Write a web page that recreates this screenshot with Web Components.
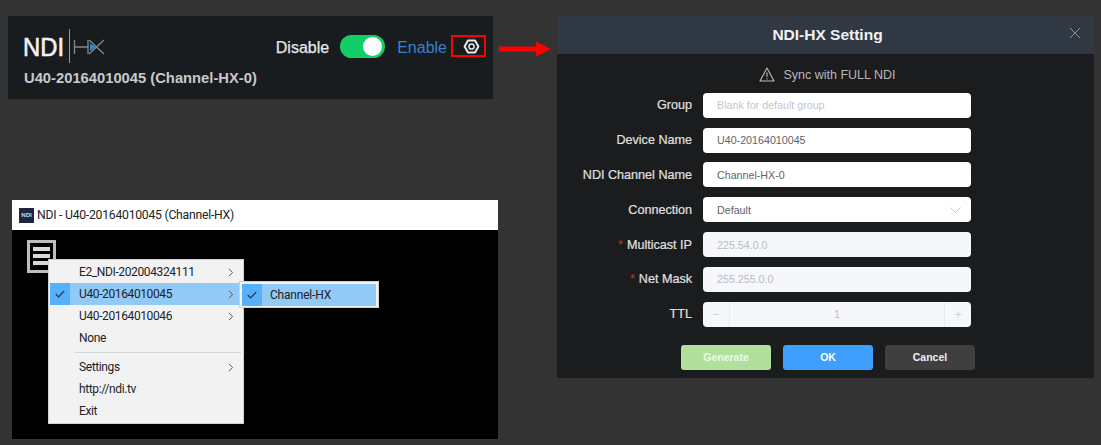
<!DOCTYPE html>
<html><head><meta charset="utf-8">
<style>
html,body{margin:0;padding:0;background:#333;}
body{width:1101px;height:445px;overflow:hidden;font-family:"Liberation Sans",Arial,sans-serif;}
</style></head>
<body>
<template id="t-page"><style>
:host{display:flex;width:1101px;height:445px;box-sizing:border-box;padding:16px 0 0 8px;align-items:flex-start;background:#333}
.left{display:flex;flex-direction:column;width:490px;flex:none}
.arrow{flex:none;width:54px;margin:21px 0 0 1px;display:flex}
</style>
<div class="left"><slot name="left"></slot></div>
<div class="arrow"><svg width="54" height="24" viewBox="0 0 54 24"><path d="M0 9.500H37V4.500L52 12 37 19.500V14.500H0Z" fill="#f00"/></svg></div>
<slot name="right"></slot>
</template>

<template id="t-panel"><style>
:host{display:flex;flex-direction:column;box-sizing:border-box;width:485px;height:83px;background:#191c1f;padding:13px 0 0 15px;color:#ddd}
.top{display:flex;align-items:center;height:36px}
.spacer{flex:1}
.dis{font-size:16px;color:#e8e8e8;margin-right:11px;position:relative;top:1px;-webkit-text-stroke:.25px #e8e8e8}
.en{font-size:16px;color:#3a80cc;margin-left:12px;position:relative;top:1px}
.sw{width:45px;height:23px;border-radius:12px;background:#13ce66;position:relative;flex:none;top:-1px}
.sw i{position:absolute;right:3px;top:2px;width:19px;height:19px;border-radius:50%;background:#fff}
.gear{width:35px;height:22px;border:2px solid #f00;box-sizing:border-box;margin:0 7px 0 4px;display:flex;align-items:center;justify-content:center;position:relative;top:-1px;padding-left:5px}
.name{font-size:14.750px;font-weight:bold;color:#c9c9c9;margin:3px 0 0 1px;line-height:20px}
</style>
<div class="top">
<svg width="84" height="36" viewBox="0 0 84 36" style="flex:none">
<text x="0" y="27" font-family="Liberation Sans" font-size="26" fill="#f2f2f2" stroke="#f2f2f2" stroke-width=".6" textLength="41" lengthAdjust="spacingAndGlyphs">NDI</text>
<rect x="46" y="0" width="1" height="34" fill="#9a9a9a"/>
<g fill="none" stroke="#87898b" stroke-width="1.300"><path d="M51.500 11V25M65 11V25M51.500 18H65"/><path d="M66 11L81 25M81 11L66 25"/></g>
<path d="M67 14.500L73 18 67 22Z" fill="#2a8ccc"/>
</svg>
<div class="spacer"></div>
<span class="dis">Disable</span><div class="sw"><i></i></div><span class="en">Enable</span>
<div class="gear"><svg width="17" height="17" viewBox="0 0 17 17"><g fill="none" stroke="#e8e8e8"><path d="M5 2.400H12L15.400 8.500 12 14.600H5L1.600 8.500Z" stroke-width="2" stroke-linejoin="round"/><circle cx="8.500" cy="8.500" r="2.600" stroke-width="1.500"/></g></svg></div>
</div>
<div class="name">U40-20164010045 (Channel-HX-0)</div>
</template>

<template id="t-window"><style>
:host{display:block;box-sizing:border-box;width:486px;height:239px;margin:101px 0 0 4px;background:#000;position:relative}
.bar{height:30px;background:#fff;display:flex;align-items:center;padding-left:7px;font:12.200px Roboto,"Noto Sans",sans-serif;letter-spacing:-.24px;color:#222;gap:3px}
.ico{width:15px;height:15px;background:#1f2440;color:#ddd;font:bold 6px "Liberation Sans";letter-spacing:0;display:flex;align-items:center;justify-content:center;flex:none}
.ham{position:absolute;left:15px;top:40px;width:29px;height:33px;box-sizing:border-box;border:3px solid #bdbdbd;display:flex;flex-direction:column;gap:3px;padding:4px 3px}
.ham i{height:4px;background:#d8d8d8;display:block}
</style>
<div class="bar"><span class="ico">NDI</span><span>NDI - U40-20164010045 (Channel-HX)</span></div>
<div class="ham"><i></i><i></i><i></i></div>
<slot></slot>
</template>

<template id="t-menu"><style>
:host{display:block;position:absolute;left:36px;top:59px;width:196px;height:165px;box-sizing:border-box;background:#f2f2f2;border:1px solid #d0d0d0;padding:1px;font:12px Roboto,"Noto Sans",sans-serif;letter-spacing:-.38px;color:#222}
</style><slot></slot></template>

<template id="t-item"><style>
:host{display:flex;align-items:center;height:22px;position:relative;box-sizing:border-box;padding-left:29px;white-space:nowrap}
:host([sel]){background:#91c9f7}
.chk{position:absolute;left:0;top:0;bottom:0;width:20px;display:none;align-items:center;justify-content:center;background:#56b0fa}
:host([sel]) .chk{display:flex}
.chev{position:absolute;right:8px;top:7px;display:none}
:host([sub]) .chev{display:block}
</style>
<span class="chk"><svg width="10" height="8" viewBox="0 0 10 8" fill="none" stroke="#1e3a55" stroke-width="1.200"><path d="M.8 4L3.600 6.800 9.200 1"/></svg></span>
<slot></slot>
<svg class="chev" width="6" height="9" viewBox="0 0 6 9" fill="none" stroke="#555" stroke-width="1"><path d="M1 .8L4.600 4.500 1 8.200"/></svg>
</template>

<template id="t-submenu"><style>
:host{display:block;position:absolute;left:227px;top:81px;width:140px;height:27px;box-sizing:border-box;background:#f2f2f2;border:1px solid #d0d0d0;padding:2px;font:12px Roboto,"Noto Sans",sans-serif;letter-spacing:-.2px;color:#222}
</style><slot></slot></template>

<template id="t-dialog"><style>
:host{display:block;width:537px;height:362px;margin-left:4px;background:#1b1c1e;flex:none}
.head{height:38px;background:#303844;display:flex;align-items:center;justify-content:center;position:relative;color:#f2f2f2;font-size:15.500px;font-weight:bold;padding-left:4px}
.x{position:absolute;right:13px;top:11px}
.note{height:38.700px;box-sizing:border-box;padding:3px 0 0 4px;display:flex;justify-content:center;align-items:center;gap:8px;font-size:12.500px;color:#b8b8b8}
.form{display:flex;flex-direction:column;gap:9.830px}
.btns{display:flex;margin:18.300px 0 0 124px;gap:12px}
</style>
<div class="head">NDI-HX Setting<svg class="x" width="12" height="12" viewBox="0 0 12 12" stroke="#8c9095" stroke-width="1" fill="none"><path d="M1 1L11 11M11 1L1 11"/></svg></div>
<div class="note"><svg width="16" height="15" viewBox="0 0 16 15" fill="none" stroke="#bdbdbd" stroke-width="1.100"><path d="M8 1L15 14H1Z" stroke-linejoin="round"/><path d="M8 5.500V10M8 11.200V12.500"/></svg><span>Sync with FULL NDI</span></div>
<div class="form"><slot></slot></div>
<div class="btns"><slot name="btn"></slot></div>
</template>

<template id="t-row"><style>
:host{display:flex;align-items:center;height:25px;font-size:12.600px}
label{width:146px;text-align:right;color:#e0e0e0;padding-right:11px;box-sizing:border-box;flex:none;-webkit-text-stroke:.2px #e0e0e0}
label b{color:#c0392b;font-weight:normal;margin-right:4px;-webkit-text-stroke:0}
.box{width:268px;height:25px;box-sizing:border-box;background:#fff;border-radius:4px;font-size:10.700px;color:#5f6368;padding-left:14px;display:flex;align-items:center;position:relative}
:host([ph]) .box{color:#c3c6cf}
:host([off]) .box{background:#f5f7fa;color:#b9bcc3}
.ch{position:absolute;right:10px;top:10px}
.n{display:none}
:host([num]) .box{padding:0;justify-content:center}
:host([num]) .n{display:flex;position:absolute;top:0;bottom:0;width:26px;align-items:center;justify-content:center;color:#d0d3d9;font-size:13px}
.n.a{left:0;border-right:1px solid #e8eaee}.n.b{right:0;border-left:1px solid #e8eaee}
</style>
<label id="l"></label>
<div class="box"><span class="n a">−</span><span id="v"></span><span class="n b">+</span><svg class="ch" id="c" style="display:none" width="11" height="6" viewBox="0 0 11 6" fill="none" stroke="#c0c4cc"><path d="M.5 .5L5.500 5.500 10.500 .5"/></svg></div>
</template>

<template id="t-btn"><style>
:host{display:flex;width:90px;height:25px;align-items:center;justify-content:center;border-radius:3px;font-size:10.500px;font-weight:bold;color:#fff;background:#409eff}
:host([k=g]){background:#b1e09c;color:#eef8ea}
:host([k=c]){background:#3f3f3f;color:#f0f0f0}
</style><slot></slot></template>

<script>
function reg(tag,tid,init){customElements.define(tag,class extends HTMLElement{constructor(){super();const r=this.attachShadow({mode:'open'});r.appendChild(document.getElementById(tid).content.cloneNode(true));if(init)init(this,r);}});}
reg('x-page','t-page');reg('x-panel','t-panel');reg('x-window','t-window');reg('x-menu','t-menu');reg('x-item','t-item');reg('x-submenu','t-submenu');reg('x-dialog','t-dialog');reg('x-btn','t-btn');
customElements.define('x-row',class extends HTMLElement{constructor(){super();const r=this.attachShadow({mode:'open'});r.appendChild(document.getElementById('t-row').content.cloneNode(true));}
connectedCallback(){const r=this.shadowRoot,l=r.getElementById('l');l.innerHTML=(this.hasAttribute('req')?'<b>*</b>':'');l.appendChild(document.createTextNode(this.getAttribute('label')));r.getElementById('v').textContent=this.getAttribute('value');if(this.hasAttribute('sel'))r.getElementById('c').style.display='block';}});
</script>

<x-page>
<x-panel slot="left"></x-panel>
<x-window slot="left">
<x-menu>
<x-item sub>E2_NDI-202004324111</x-item>
<x-item sub sel>U40-20164010045</x-item>
<x-item sub>U40-20164010046</x-item>
<x-item>None</x-item>
<hr style="border:0;height:1px;background:#d5d5d5;margin:3px 1px 3px 25px">
<x-item sub>Settings</x-item>
<x-item>http://ndi.tv</x-item>
<x-item>Exit</x-item>
</x-menu>
<x-submenu><x-item sel style="padding-left:28px">Channel-HX</x-item></x-submenu>
</x-window>
<x-dialog slot="right">
<x-row label="Group" value="Blank for default group" ph></x-row>
<x-row label="Device Name" value="U40-20164010045"></x-row>
<x-row label="NDI Channel Name" value="Channel-HX-0"></x-row>
<x-row label="Connection" value="Default" sel></x-row>
<x-row label="Multicast IP" value="225.54.0.0" req off></x-row>
<x-row label="Net Mask" value="255.255.0.0" req off></x-row>
<x-row label="TTL" value="1" num off></x-row>
<x-btn slot="btn" k="g">Generate</x-btn>
<x-btn slot="btn">OK</x-btn>
<x-btn slot="btn" k="c">Cancel</x-btn>
</x-dialog>
</x-page>
</body></html>
